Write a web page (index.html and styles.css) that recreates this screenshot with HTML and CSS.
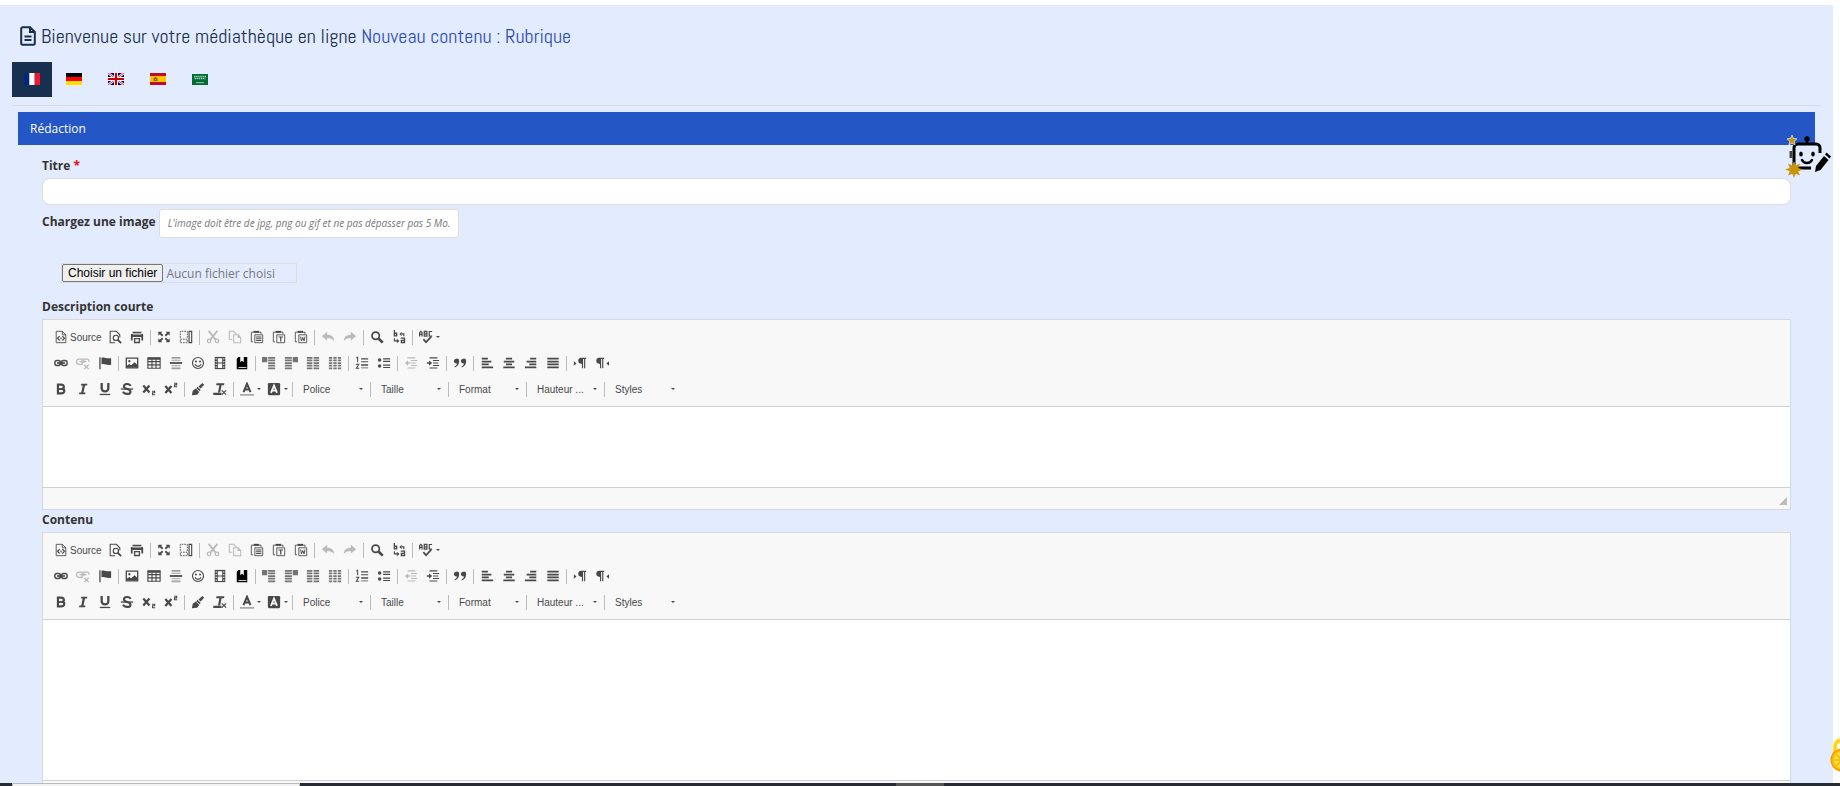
FILE: index.html
```html
<!DOCTYPE html>
<html lang="fr">
<head>
    <meta charset="UTF-8">
    <meta name="viewport" content="width=device-width, initial-scale=1.0">
    <title>Nouveau contenu : Rubrique</title>
    <link rel="stylesheet" href="styles.css">
</head>
<body>
    <!-- Icônes -->
    <svg class="sprite" aria-hidden="true">
        <symbol id="i-source" viewBox="0 0 16 16"><path d="M2.500 1.500h7l4 4v9h-11zM9.500 1.500v4h4" fill="none" stroke="currentColor"/><path d="M6.500 7l-2.500 2.500L6.500 12M9.500 7l2.500 2.500L9.500 12" fill="none" stroke="currentColor" stroke-width="1.400"/><path d="M7.300 8.500h1.400v2H7.300z"/></symbol>
        <symbol id="i-preview" viewBox="0 0 16 16"><path d="M8 14.500H2.500v-13h7l4 4v3" fill="none" stroke="currentColor" stroke-width="1.200"/><circle cx="9" cy="9" r="3" fill="none" stroke="currentColor" stroke-width="1.300"/><path d="M11 11l4 4" stroke="currentColor" stroke-width="2"/></symbol>
        <symbol id="i-print" viewBox="0 0 16 16"><path d="M3 2h10v2H3zM1 4.500h14V12h-2V8H3v4H1zM4.500 9h7v6h-7z"/><path d="M3 4.200h10v1H3zM6 10.500h4v3H6z" fill="#f8f8f8"/></symbol>
        <symbol id="i-max" viewBox="0 0 16 16"><path d="M1.500 2H6L4.700 3.300l2.500 2.500-1.500 1.500L3.200 4.800 1.500 6.500zM14.500 2v4.500l-1.700-1.700-2.500 2.500-1.500-1.500 2.500-2.500L10 2zM1.500 14V9.500l1.700 1.700 2.500-2.500 1.500 1.500-2.500 2.500L6 14zM14.500 14H10l1.300-1.300-2.500-2.500 1.500-1.500 2.500 2.500 1.700-1.700z"/></symbol>
        <symbol id="i-blocks" viewBox="0 0 16 16"><path d="M1.500 9V1.500h8V9" fill="none" stroke="currentColor" stroke-dasharray="2 1"/><path d="M1.500 10.500h8v4h-8z" fill="none" stroke="currentColor" stroke-dasharray="2 1"/><path d="M11.500 1.500h3v13h-3z" fill="none" stroke="currentColor" stroke-width="1.300"/></symbol>
        <symbol id="i-cut" viewBox="0 0 16 16"><path d="M3 1l8 10M13 1L5 11" fill="none" stroke="currentColor" stroke-width="2"/><circle cx="3.500" cy="12.500" r="2" fill="none" stroke="currentColor" stroke-width="1.500"/><circle cx="12.500" cy="12.500" r="2" fill="none" stroke="currentColor" stroke-width="1.500"/></symbol>
        <symbol id="i-copy" viewBox="0 0 16 16"><path d="M5 10.500H1.500v-9h5l3 3M6.500 5.500h5l3 3v6h-8zM11.500 5.500v3h3" fill="none" stroke="currentColor" stroke-width="1.200"/></symbol>
        <symbol id="i-clip" viewBox="0 0 16 16"><path d="M3.500 13.500h-2v-11H4M10.500 2.500h2v2" fill="none" stroke="currentColor"/><path d="M4 1h6.500v2.300H4z"/><path d="M5.500 5.500h9v9h-9z" fill="none" stroke="currentColor"/></symbol>
        <symbol id="i-paste" viewBox="0 0 16 16"><use href="#i-clip"/><path d="M7 7.500h6v1H7zM7 9.500h6v1H7zM7 11.500h6v1H7z"/></symbol>
        <symbol id="i-pastetext" viewBox="0 0 16 16"><use href="#i-clip"/><path d="M7.500 7.500h5v1.200h-1.800V13H9.300V8.700H7.500z"/></symbol>
        <symbol id="i-pasteword" viewBox="0 0 16 16"><use href="#i-clip"/><path d="M7.500 7.500l1 5 1.500-4 1.500 4 1-5" fill="none" stroke="currentColor" stroke-width="1.100"/></symbol>
        <symbol id="i-undo" viewBox="0 0 16 16"><path d="M1 7l6-5v3.500c5 0 8 2.500 8 7C13.500 10 11 9 7 9v3z"/></symbol>
        <symbol id="i-redo" viewBox="0 0 16 16"><path d="M15 7L9 2v3.500c-5 0-8 2.500-8 7C2.500 10 5 9 9 9v3z"/></symbol>
        <symbol id="i-find" viewBox="0 0 16 16"><circle cx="6.500" cy="6.500" r="4.200" fill="none" stroke="currentColor" stroke-width="2"/><path d="M10 10l4.500 4.500" stroke="currentColor" stroke-width="3"/></symbol>
        <symbol id="i-replace" viewBox="0 0 16 16"><path d="M2.700 0v7.300M2 3.700h3.300v3H2M10 9.200h4.300V15M14.300 11.800h-3.600v2.500h3.600" fill="none" stroke="currentColor" stroke-width="1.500"/><path d="M2.700 9.500v3h3M13.500 7V4.500H11" fill="none" stroke="currentColor" stroke-width="1.300"/><path d="M5.500 10l3 2.500-3 2.500zM11 2L8.500 4.500 11 7z"/></symbol>
        <symbol id="i-spell" viewBox="0 0 16 16"><path d="M.7 7.500V3L2 1.500 3.500 3v4.500M.7 5h3M6 1.500v5.500h3V1.500zM6 4.300h3M15 1.700h-3.300V7H15" fill="none" stroke="currentColor" stroke-width="1.400"/><path d="M5 10.500l3 3.500 6-6.500" fill="none" stroke="currentColor" stroke-width="2"/></symbol>
        <symbol id="i-link" viewBox="0 0 16 16"><rect x="1" y="5.200" width="6.500" height="5.600" rx="2.500" fill="none" stroke="currentColor" stroke-width="1.600"/><rect x="8.500" y="5.200" width="6.500" height="5.600" rx="2.500" fill="none" stroke="currentColor" stroke-width="1.600"/><path d="M3.500 7h9v2h-9z"/></symbol>
        <symbol id="i-unlink" viewBox="0 0 16 16"><path d="M7 9.500H3.500a2 2 0 010-6H7zM9 8V3.500h3.500a2 2 0 012 3M4 6.500h8M9.500 10l5 5M14.500 10l-5 5" fill="none" stroke="currentColor" stroke-width="1.500"/></symbol>
        <symbol id="i-flag" viewBox="0 0 16 16"><path d="M1.500 1.500H3V15H1.500zM4 2c4-1.500 5 1.500 11 .5v7.500c-6 1-7-2-11-.5z"/></symbol>
        <symbol id="i-image" viewBox="0 0 16 16"><path d="M1.500 2.500h13v11h-13z" fill="none" stroke="currentColor" stroke-width="1.500"/><circle cx="5" cy="6" r="1.300"/><path d="M2 13V11l3-2 2 1.500 4-3.500 3 3v3z"/></symbol>
        <symbol id="i-table" viewBox="0 0 16 16"><path d="M1 2h14v12H1zM1 6.500h14M1 10.200h14M5.700 4v10M10.300 4v10" fill="none" stroke="currentColor" stroke-width="1.300"/><path d="M1 2h14v2.300H1z"/></symbol>
        <symbol id="i-hr" viewBox="0 0 16 16"><path d="M3 1h10v2H3zM3 4.300h10v1H3zM3 10.700h10v1H3zM3 13h10v2H3z" opacity=".5"/><path d="M1 7h14v2H1z"/></symbol>
        <symbol id="i-smiley" viewBox="0 0 16 16"><circle cx="8" cy="8" r="6.300" fill="none" stroke="currentColor" stroke-width="1.300"/><circle cx="5.700" cy="6.300" r="1.100"/><circle cx="10.300" cy="6.300" r="1.100"/><path d="M4.500 9.500c1.500 3.200 5.500 3.200 7 0" fill="none" stroke="currentColor" stroke-width="1.300"/></symbol>
        <symbol id="i-film" viewBox="0 0 16 16"><path d="M2 1h12v14H2z"/><path d="M5.500 2.500h5v5h-5zM5.500 8.700h5v5h-5zM3 2.500h1.300V4H3zM3 5.700h1.300v1.500H3zM3 8.900h1.300v1.500H3zM3 12h1.300v1.500H3zM11.700 2.500H13V4h-1.300zM11.700 5.700H13v1.500h-1.300zM11.700 8.900H13v1.500h-1.300zM11.700 12H13v1.500h-1.300z" fill="#f8f8f8"/></symbol>
        <symbol id="i-book" viewBox="0 0 16 16"><path d="M4 1h2v6l2-1.500L10 7V1h4v14H2V3z" fill="#000"/><path d="M4 12.500h9v1H4z" fill="#f8f8f8"/></symbol>
        <symbol id="i-tplleft" viewBox="0 0 16 16"><path d="M0 1h6v6H0zM7 1h8v2H7zM7 4h8v2H7zM7 7h8v2H7zM7 10h8v2H7zM7 13h8v2H7z"/></symbol>
        <symbol id="i-tplright" viewBox="0 0 16 16"><path d="M10 1h6v6h-6zM1 1h8v2H1zM1 4h8v2H1zM1 7h8v2H1zM1 10h8v2H1zM1 13h8v2H1z"/></symbol>
        <symbol id="i-col2" viewBox="0 0 16 16"><path d="M1 2h14M1 5h14M1 8h14M1 11h14M1 14h14" fill="none" stroke="currentColor" stroke-width="2" stroke-dasharray="6.300 1.400"/></symbol>
        <symbol id="i-col3" viewBox="0 0 16 16"><path d="M1 2h14M1 5h14M1 8h14M1 11h14M1 14h14" fill="none" stroke="currentColor" stroke-width="2" stroke-dasharray="3.800 1.300"/></symbol>
        <symbol id="i-ol" viewBox="0 0 16 16"><path d="M7 2.500h8v1.500H7zM7 6h8v1H7zM7 9.500h8V11H7zM7 13h8v1H7z"/><path d="M1.500 2.500L3 1.500V7M1 9.500h3.300L1.500 14h3.300" fill="none" stroke="currentColor" stroke-width="1.200"/></symbol>
        <symbol id="i-ul" viewBox="0 0 16 16"><circle cx="3" cy="4.500" r="2"/><circle cx="3" cy="11.500" r="2"/><path d="M7 2.700h8v1.300H7zM7 5.500h8v1.300H7zM7 9.700h8V11H7zM7 12.500h8v1.300H7z"/></symbol>
        <symbol id="i-outdent" viewBox="0 0 16 16"><path d="M4 1.500h9v1.300H4zM8 4.500h7v1.300H8zM8 7.300h6v1.300H8zM8 10.200h7v1.300H8zM4 13h9v1.300H4zM1 8l3.500-3v2.200H7v1.600H4.500V11z"/></symbol>
        <symbol id="i-indent" viewBox="0 0 16 16"><path d="M4 1.500h9v1.300H4zM8 4.500h7v1.300H8zM8 7.300h6v1.300H8zM8 10.200h7v1.300H8zM4 13h9v1.300H4zM7 8L3.500 5v2.200H1v1.600h2.500V11z"/></symbol>
        <symbol id="i-quote" viewBox="0 0 16 16"><path d="M4 3a2.800 2.800 0 013 3c0 4-2 6-5 7v-1.500C3.500 11 4.300 10 4.500 8.500 2.500 8.700 1 7.500 1 6a3 3 0 013-3zM12 3a2.800 2.800 0 013 3c0 4-2 6-5 7v-1.500c1.500-.5 2.300-1.500 2.500-3C10.500 8.700 9 7.500 9 6a3 3 0 013-3z"/></symbol>
        <symbol id="i-left" viewBox="0 0 16 16"><path d="M2 2h7v2H2zM2 5.300h11v2H2zM2 8.600h8v2H2zM2 12h13v2H2z"/></symbol>
        <symbol id="i-center" viewBox="0 0 16 16"><path d="M4.500 2h7v2h-7zM2 5.300h12v2H2zM4.500 8.600h7v2h-7zM1.500 12h13v2h-13z"/></symbol>
        <symbol id="i-right" viewBox="0 0 16 16"><path d="M7 2h7v2H7zM3 5.300h11v2H3zM6 8.600h8v2H6zM1 12h13v2H1z"/></symbol>
        <symbol id="i-justify" viewBox="0 0 16 16"><path d="M1.500 2h13v2h-13zM1.500 5.300h13v2h-13zM1.500 8.600h13v2h-13zM1.500 12h13v2h-13z"/></symbol>
        <symbol id="i-ltr" viewBox="0 0 16 16"><path d="M1 6l3 2.500L1 11zM9 2h6v1.500h-1V14h-1.300V3.500h-1.200V14h-1.300V9C7 9 6 7.500 6 5.500S7 2 9 2z"/></symbol>
        <symbol id="i-rtl" viewBox="0 0 16 16"><path d="M16 6l-3 2.500 3 2.500zM4.500 2h6v1.500h-1V14H8.200V3.500H7V14H5.700V9C2.500 9 1.500 7.500 1.500 5.500s1-3.500 3-3.500z"/></symbol>
        <symbol id="i-bold" viewBox="0 0 16 16"><path d="M4.500 3H8c4 0 4 4 1.700 4.800 3 .7 2.800 5.200-1.500 5.200H4.500z" fill="none" stroke="currentColor" stroke-width="2.500"/><path d="M4 7h5v2H4z"/></symbol>
        <symbol id="i-italic" viewBox="0 0 16 16"><path d="M6 2h7l-.4 2h-2.300l-1.700 8h2.200l-.4 2h-7l.4-2H6l1.700-8H5.600z"/></symbol>
        <symbol id="i-underline" viewBox="0 0 16 16"><path d="M4.200 1v6c0 5 7.600 5 7.600 0V1" fill="none" stroke="currentColor" stroke-width="2.600"/><path d="M2 13.500h12V15H2z"/></symbol>
        <symbol id="i-strike" viewBox="0 0 16 16"><path d="M12 4.500C11 1.500 4.500 1.500 4.500 5S12 7.500 12 11s-7 3.500-8.500 0" fill="none" stroke="currentColor" stroke-width="2.400"/><path d="M1 7.300h14v1.500H1z"/></symbol>
        <symbol id="i-sub" viewBox="0 0 16 16"><path d="M1.500 4l7 8M8.500 4l-7 8" fill="none" stroke="currentColor" stroke-width="2.500"/><path d="M11.500 10.500h3v1.800h-2.500v2.200h3" fill="none" stroke="currentColor" stroke-width="1.200"/></symbol>
        <symbol id="i-sup" viewBox="0 0 16 16"><path d="M1.500 4.500l7 8M8.500 4.500l-7 8" fill="none" stroke="currentColor" stroke-width="2.500"/><path d="M11.500 1.500h3v1.800h-2.500v2.200h3" fill="none" stroke="currentColor" stroke-width="1.200"/></symbol>
        <symbol id="i-brush" viewBox="0 0 16 16"><path d="M13 1l2 2-4 4.500L8.500 5zM7.500 5.500l3.500 3.500-1 1.500L6 7zM5.500 7.500L9.500 11.500 7 14.500 1 15l1-5z"/></symbol>
        <symbol id="i-clear" viewBox="0 0 16 16"><path d="M4 1.500h9l-.4 2.200H9.800L8.200 12h-2.500l1.600-8.300H3.600z"/><path d="M1 13h8v1.300H1zM10 9.500l5 5M15 9.500l-5 5" stroke="currentColor" stroke-width="1.300"/></symbol>
        <symbol id="i-color" viewBox="0 0 16 16"><path d="M4 11.500L8 2l4 9.500M5.300 8.500h5.400" fill="none" stroke="currentColor" stroke-width="2.300"/><path d="M0 14h16v1.500H0z" opacity=".6"/></symbol>
        <symbol id="i-bgcolor" viewBox="0 0 16 16"><rect x="1" y="1" width="14" height="14" rx="1.500"/><path d="M4.500 12.500L8 4l3.500 8.500M5.500 9.800h5" fill="none" stroke="#f8f8f8" stroke-width="2"/></symbol>
    </svg>

    <main class="page">
        <h1 class="page-title">
            <svg class="title-icon" viewBox="0 0 16 20" aria-hidden="true"><path d="M2.500 1.200h7.500l4.800 4.800v11.300a1.500 1.500 0 01-1.500 1.500H2.700a1.500 1.500 0 01-1.500-1.500V2.700a1.500 1.500 0 011.300-1.500zM10 1.500V6h4.500M4.500 10.500h7M4.500 14h7" fill="none" stroke="currentColor" stroke-width="2"/></svg>
            <span>Bienvenue sur votre médiathèque en ligne <span class="subtitle">Nouveau contenu : Rubrique</span></span>
        </h1>

        <!-- Choix de la langue -->
        <nav class="langs">
            <a href="#fr" class="active" aria-label="Français"><svg viewBox="0 0 16 12"><path fill="#00267f" d="M0 0h5.300v12H0z"/><path fill="#fff" d="M5.300 0h5.400v12H5.300z"/><path fill="#f31830" d="M10.700 0H16v12h-5.300z"/></svg></a>
            <a href="#de" aria-label="Allemand"><svg viewBox="0 0 16 12"><path d="M0 0h16v4H0z"/><path fill="#f00" d="M0 4h16v4H0z"/><path fill="#ffe000" d="M0 8h16v4H0z"/></svg></a>
            <a href="#en" aria-label="Anglais"><svg viewBox="0 0 16 12"><path fill="#006" d="M0 0h16v12H0z"/><path d="M0 0l16 12M16 0L0 12" stroke="#fff" stroke-width="2.400"/><path d="M0 0l16 12M16 0L0 12" stroke="#c00" stroke-width=".8"/><path d="M8 0v12M0 6h16" stroke="#fff" stroke-width="4"/><path d="M8 0v12M0 6h16" stroke="#c00" stroke-width="2.200"/></svg></a>
            <a href="#es" aria-label="Espagnol"><svg viewBox="0 0 16 12"><path fill="#c60b1e" d="M0 0h16v12H0z"/><path fill="#ffc400" d="M0 3h16v6H0z"/><path fill="#a5582a" d="M3.500 5h4v3h-4zM4.500 4h2v1h-2z"/><path fill="#e0b060" d="M5 6h1v1H5z"/></svg></a>
            <a href="#ar" aria-label="Arabe"><svg viewBox="0 0 16 12"><path fill="#006c35" d="M0 1h16v11H0z"/><path d="M2 3.500h12M2.500 5.500h11" stroke="#9cc8ae" stroke-width="1.500" stroke-dasharray="1.500 .6"/><path d="M4 9.700h8" stroke="#9cc8ae"/></svg></a>
        </nav>

        <form class="panel">
            <h2 class="panel-title">Rédaction</h2>
            <button type="button" class="assistant" aria-label="Assistant de rédaction">
                <svg viewBox="0 0 44 42">
                    <path d="M34 17v-5a4 4 0 00-4-4H12a4 4 0 00-4 4v20h17" fill="none" stroke="#000" stroke-width="3"/>
                    <path d="M21 8V3" stroke="#000" stroke-width="2"/><circle cx="21" cy="3" r="2.700"/>
                    <path d="M5 15v7" stroke="#444" stroke-width="3"/>
                    <ellipse cx="15" cy="18" rx="1.800" ry="2.600"/><ellipse cx="27" cy="18" rx="1.800" ry="2.600"/>
                    <path d="M16 24c2 4 8 4 10 0" fill="none" stroke="#000" stroke-width="2.500" stroke-linecap="round"/>
                    <path d="M29 36l1-6 8-10 4.500 4-8 10zM39 18.500l1.500-2 4.500 4-1.500 2z"/>
                    <path d="M6-1l1.400 3.400 3.600.4-2.700 2.500.8 3.600L6 7.100 2.900 8.900l.8-3.600L1 2.800l3.600-.4z" fill="#c8960c" stroke="#fff" stroke-width=".6"/>
                    <path d="M8 25l1.700 4.500L14 27.500 12.300 32l4.700 1.500-4.700 1.700L14 39.500l-4.300-1.700L8 42l-1.700-4.200L2 39.500l1.700-4.300L-1 33.500 3.700 32 2 27.500l4.300 2z" fill="#c8960c"/>
                </svg>
            </button>

            <div class="fields">
                <label class="field-label" for="titre">Titre <span class="required">*</span></label>
                <input type="text" id="titre" class="text-input" required>

                <div class="upload-head">
                    <label class="field-label" for="image">Chargez une image</label>
                    <span class="hint">L'image doit être de jpg, png ou gif et ne pas dépasser pas 5 Mo.</span>
                </div>
                <div class="file-input">
                    <input type="file" id="image" class="file-native" accept="image/*">
                    <label for="image" class="file-button">Choisir un fichier</label>
                    <span class="file-name">Aucun fichier choisi</span>
                </div>

                <label class="field-label" for="description">Description courte</label>
                <div class="editor">
                    <div class="toolbar"></div>
                    <textarea id="description" class="editor-area short"></textarea>
                    <div class="editor-bottom"><span class="grip"></span></div>
                </div>

                <label class="field-label" for="contenu">Contenu</label>
                <div class="editor">
                    <div class="toolbar"></div>
                    <textarea id="contenu" class="editor-area long"></textarea>
                    <div class="editor-bottom"><span class="grip"></span></div>
                </div>
            </div>
        </form>
    </main>

    <button type="button" class="cookies" aria-label="Cookies">
        <svg viewBox="0 0 32 36">
            <path d="M5 16V9a7 7 0 0114 0v7" fill="none" stroke="#fff3a0" stroke-width="6"/>
            <path d="M5 16V9a7 7 0 0114 0v7" fill="none" stroke="#ffd21a" stroke-width="3"/>
            <circle cx="12" cy="22" r="11.500" fill="#f39c12"/><circle cx="12" cy="22" r="9" fill="#ffe14d"/>
            <path d="M12 13v18M3 22h18M6 16l12 12M18 16L6 28" stroke="#f7b500" stroke-width="1.500"/><circle cx="12" cy="22" r="9" fill="none" stroke="#ffc400" stroke-width="2"/>
        </svg>
    </button>

    <div class="bottom-bar"><span class="bar-tab"></span><span class="bar-handle"></span></div>

    <script src="script.js"></script>
</body>
</html>
```
FILE: script.js
```js
// Lignes de la barre d'outils, "|" = séparateur, "-" = bouton désactivé, "+" = bouton avec menu
const rows = [
    'source preview print | max blocks | -cut -copy paste pastetext pasteword | -undo -redo | find replace | +spell',
    'link -unlink flag | image table hr smiley film book | tplleft tplright col2 col3 | ol ul | -outdent indent | quote | left center right justify | ltr rtl',
    'bold italic underline strike sub sup | brush clear | +color +bgcolor |'
];
const combos = ['Police', 'Taille', 'Format', 'Hauteur ...', 'Styles'];

function tool(token) {
    if (token === '|') return '<span class="sep"></span>';
    const name = token.replace(/^[-+]/, '');
    const off = token[0] === '-' ? ' disabled' : '';
    const menu = token[0] === '+' ? ' has-menu' : '';
    const text = name === 'source' ? '<span>Source</span>' : '';
    return `<button type="button" class="tool tool-${name}${menu}" aria-label="${name}"${off}><svg viewBox="0 0 16 16"><use href="#i-${name}"/></svg>${text}</button>`;
}

function combo(name) {
    return `<span class="combo"><select aria-label="${name}"><option>${name}</option></select></span>`;
}

document.querySelectorAll('.toolbar').forEach(bar => {
    bar.innerHTML = rows.map((row, i) => {
        const extra = i === 2 ? combos.map(combo).join('<span class="sep"></span>') : '';
        return `<div class="tool-row">${row.split(' ').map(tool).join('')}${extra}</div>`;
    }).join('');
});
```
FILE: styles.css
```css
* {
    box-sizing: border-box;
}

html {
    height: 100%;
    overflow: hidden;
}

body {
    margin: 0;
    height: 100%;
    overflow: hidden;
    padding: 5px 7px 0 0;
    background-color: #fff;
    color: #333;
    font-family: "Open Sans", sans-serif;
    font-size: 12px;
}

.sprite {
    display: none;
}

.page {
    padding: 12px 12px 0;
    background-color: #e3ebff;
}

.page-title {
    display: flex;
    align-items: center;
    gap: 5px;
    margin: 0 0 7px;
    padding-left: 8px;
    height: 38px;
    font-family: Abel, "Roboto Condensed", Lato, sans-serif;
    font-size: 20px;
    font-weight: normal;
    color: #1a2f4f;
    white-space: nowrap;
}

.subtitle {
    color: #2e4db5;
}

.title-icon {
    width: 16px;
    height: 20px;
}

/* Langues */
.langs {
    display: flex;
    gap: 2px;
    padding-bottom: 8px;
    border-bottom: 1px solid #d8dbe2;
}

.langs a {
    display: flex;
    align-items: center;
    justify-content: center;
    width: 40px;
    height: 35px;
    padding-bottom: 1px;
}

.langs a.active {
    background-color: #18304f;
}

.langs svg {
    width: 16px;
    height: 12px;
}

/* Formulaire */
.panel {
    position: relative;
    margin: 6px 6px 0;
}

.panel-title {
    margin: 0;
    padding: 0 12px;
    background-color: #2456c5;
    color: #fff;
    font-size: 12px;
    font-weight: normal;
    line-height: 33px;
}

.assistant {
    position: absolute;
    top: 24px;
    right: -15px;
    width: 44px;
    height: 42px;
    padding: 0;
    border: 0;
    background: none;
}

.assistant svg {
    display: block;
    overflow: visible;
}

.fields {
    padding: 11px 24px 0;
}

.field-label {
    display: block;
    font-weight: bold;
    line-height: 20px;
}

.required {
    color: #f00;
}

.text-input {
    display: block;
    width: 100%;
    height: 27px;
    margin-top: 2px;
    padding: 0 8px;
    border: 1px solid #ddd;
    border-radius: 8px;
    background-color: #fff;
}

.upload-head {
    display: flex;
    gap: 3px;
    margin-top: 4px;
}

.upload-head .field-label {
    line-height: 26px;
}

.hint {
    padding: 0 8px;
    border: 1px solid #ddd;
    border-radius: 3px;
    background-color: #fff;
    color: #777;
    font-size: 10px;
    font-style: italic;
    line-height: 27px;
}

.file-input {
    display: flex;
    align-items: center;
    width: 236px;
    height: 20px;
    margin: 25px 0 14px 19px;
    border: 1px solid #ddd;
    color: #777;
}

.file-native {
    position: absolute;
    width: 1px;
    height: 1px;
    opacity: 0;
}

.file-button {
    padding: 0 5px;
    border: 1px solid #767676;
    border-radius: 2px;
    background-color: #efefef;
    color: #000;
    font-family: "Liberation Sans", Arial, sans-serif;
    font-size: 12px;
    line-height: 16px;
}

.file-name {
    padding-left: 3px;
}

/* Editeur */
.editor {
    margin-top: 2px;
    border: 1px solid #d8d8d8;
    background-color: #f8f8f8;
}

.toolbar {
    padding: 4px 7px;
    border-bottom: 1px solid #d1d1d1;
    color: #484848;
}

.tool-row {
    display: flex;
    align-items: center;
    height: 26px;
}

.tool {
    display: flex;
    align-items: center;
    width: 22px;
    height: 22px;
    padding: 0 4px;
    border: 0;
    background: none;
    color: inherit;
    font-family: "Liberation Sans", Arial, sans-serif;
    font-size: 10px;
}

.tool svg {
    flex: none;
    width: 14px;
    height: 14px;
    fill: currentColor;
}

.tool:disabled {
    opacity: .35;
}

.tool-source {
    gap: 2px;
    width: 54px;
}

.tool-tplleft svg,
.tool-tplright svg,
.tool-col2 svg,
.tool-col3 svg {
    opacity: .75;
}

.has-menu {
    gap: 3px;
    width: 27px;
}

.has-menu::after,
.combo::after {
    content: "";
    flex: none;
    border: 2px solid transparent;
    border-top-color: #484848;
    border-bottom: 0;
}

.sep {
    width: 1px;
    height: 15px;
    margin: 0 2px;
    background-color: #bcbcbc;
}

.combo {
    display: flex;
    align-items: center;
    width: 73px;
    padding: 0 5px 0 8px;
}

.combo select {
    flex: 1;
    min-width: 0;
    padding: 0;
    border: 0;
    appearance: none;
    background: none;
    color: #484848;
    font-family: "Liberation Sans", Arial, sans-serif;
    font-size: 10px;
}

.editor-area {
    display: block;
    width: 100%;
    padding: 8px;
    border: 0;
    background-color: #fff;
    resize: none;
}

.short {
    height: 80px;
}

.long {
    height: 160px;
}

.editor-bottom {
    display: flex;
    align-items: flex-end;
    justify-content: flex-end;
    height: 22px;
    padding: 4px 3px;
    border-top: 1px solid #d1d1d1;
}

.grip {
    border: 4px solid #bcbcbc;
    border-top-color: transparent;
    border-left-color: transparent;
}

/* Elements fixes */
.cookies {
    position: fixed;
    right: -22px;
    bottom: 12px;
    width: 32px;
    height: 36px;
    padding: 0;
    border: 0;
    background: none;
}

.bottom-bar {
    position: fixed;
    left: 0;
    right: 0;
    bottom: 0;
    display: flex;
    justify-content: space-between;
    height: 3px;
    padding-left: 12px;
    background-color: #272b33;
}

.bar-tab {
    width: 288px;
    border: 1px solid #bbb;
    border-bottom: 0;
    background-color: #f3f3f3;
}

.bar-handle {
    width: 48px;
    margin-right: 49%;
    background-color: #555;
}
```
